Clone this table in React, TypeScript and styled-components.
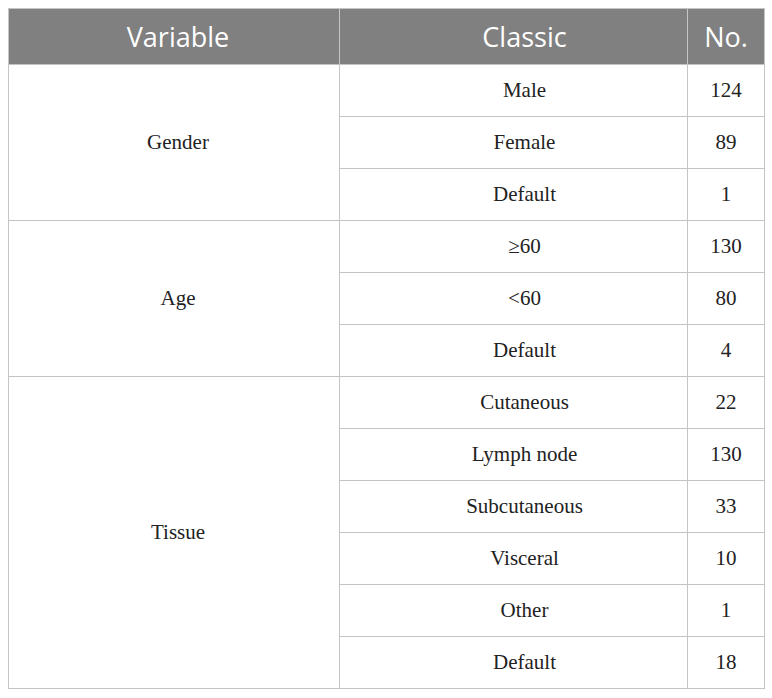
import React from "react";
import styled, { createGlobalStyle } from "styled-components";

const Global = createGlobalStyle`
  html, body { margin: 0; padding: 0; background: #ffffff; }
  body { padding: 8px; }
`;

const Table = styled.table`
  border-collapse: collapse;
  width: 756px;
  table-layout: fixed;
  border: 1px solid #c4c4c4;
`;

const Col = styled.col<{ $w: number }>`
  width: ${(p) => p.$w}px;
`;

const HeadCell = styled.th<{ $pl: number }>`
  height: 55px;
  padding: 0 0 0 ${(p) => p.$pl}px;
  background: #808080;
  color: #ffffff;
  font-family: "Open Sans", "Noto Sans", sans-serif;
  font-weight: 400;
  font-size: 27px;
  text-align: center;
  vertical-align: middle;
  border-left: 1px solid #c4c4c4;
  border-right: 1px solid #c4c4c4;
`;

const Cell = styled.td<{ $pl: number }>`
  height: 51px;
  padding: 0 0 0 ${(p) => p.$pl}px;
  font-family: "Liberation Serif", "Times New Roman", serif;
  font-size: 21px;
  color: #222222;
  text-align: center;
  vertical-align: middle;
  border: 1px solid #c4c4c4;
`;

type Group = { name: string; rows: [string, string][] };

const data: Group[] = [
  { name: "Gender", rows: [["Male", "124"], ["Female", "89"], ["Default", "1"]] },
  { name: "Age", rows: [["≥60", "130"], ["<60", "80"], ["Default", "4"]] },
  {
    name: "Tissue",
    rows: [
      ["Cutaneous", "22"],
      ["Lymph node", "130"],
      ["Subcutaneous", "33"],
      ["Visceral", "10"],
      ["Other", "1"],
      ["Default", "18"],
    ],
  },
];

export default function App() {
  return (
    <>
      <Global />
      <Table>
        <colgroup>
          <Col $w={331} />
          <Col $w={348} />
          <Col $w={77} />
        </colgroup>
        <thead>
          <tr>
            <HeadCell $pl={8}>Variable</HeadCell>
            <HeadCell $pl={22}>Classic</HeadCell>
            <HeadCell $pl={0}>No.</HeadCell>
          </tr>
        </thead>
        <tbody>
          {data.map((g) =>
            g.rows.map(([c, n], i) => (
              <tr key={g.name + i}>
                {i === 0 && (
                  <Cell $pl={8} rowSpan={g.rows.length}>
                    {g.name}
                  </Cell>
                )}
                <Cell $pl={22}>{c}</Cell>
                <Cell $pl={0}>{n}</Cell>
              </tr>
            ))
          )}
        </tbody>
      </Table>
    </>
  );
}
